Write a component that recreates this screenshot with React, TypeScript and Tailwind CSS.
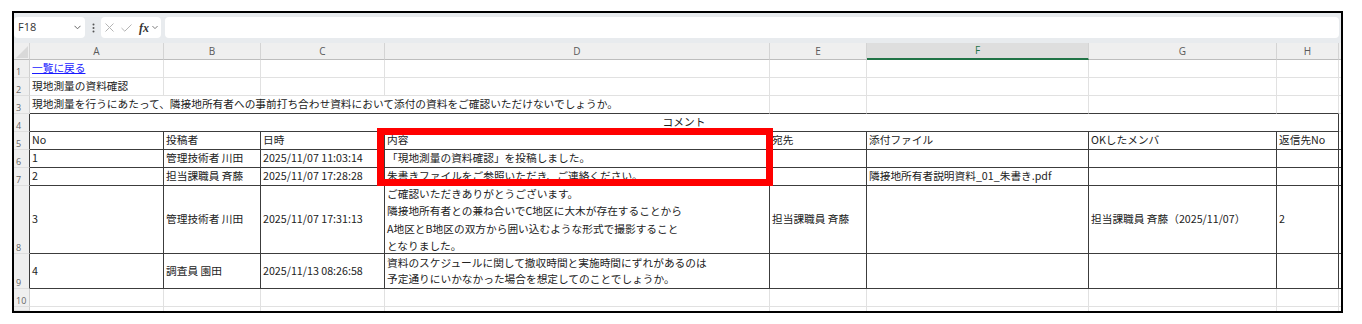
import React from 'react';

// column widths (A..H), right border included
const W = ['w-[134px]', 'w-[97px]', 'w-[124px]', 'w-[385px]', 'w-[97px]', 'w-[222px]', 'w-[188px]', 'w-[62px]'];
const LETTERS = ['A', 'B', 'C', 'D', 'E', 'F', 'G', 'H'];

const R_LIGHT = 'border-r-[#e1e1e1]';
const R_DARK = 'border-r-[#3c3c3c]';
const B_LIGHT = 'border-b-[#e1e1e1]';
const B_DARK = 'border-b-[#3c3c3c]';

type Content = string | string[];

interface CellProps {
  w: string;
  r?: string;
  b?: string;
  lh?: string;
  className?: string;
  children?: Content | React.ReactNode;
}

const Cell: React.FC<CellProps> = ({ w, r = R_LIGHT, b = B_LIGHT, lh = 'leading-[17px]', className = '', children }) => {
  const multi = Array.isArray(children);
  return (
    <div className={`${w} shrink-0 h-full border-r border-b ${r} ${b} flex ${multi ? 'flex-col justify-center' : 'items-center'} px-[2px] whitespace-nowrap overflow-hidden ${className}`}>
      {multi ? (children as string[]).map((line, i) => <span key={i} className={`block ${lh}`}>{line}</span>) : children}
    </div>
  );
};

const RowHead: React.FC<{ n?: number; dark?: boolean }> = ({ n, dark }) => (
  <div className={`w-[16px] shrink-0 h-full bg-[#efefef] border-r border-b border-b-[#dedede] ${dark ? R_DARK : 'border-r-[#cfcfcf]'} flex items-end pl-[2px] pb-[1px] text-[9px] leading-none text-[#666] font-['Open_Sans',sans-serif]`}>
    {n}
  </div>
);

const Filler: React.FC<{ b?: string }> = ({ b = B_LIGHT }) => <div className={`flex-1 h-full border-b ${b}`} />;

interface DataRowProps {
  n: number;
  h: string;
  cells: Content[];
  lh?: string;
  dark?: boolean;
}

const DataRow: React.FC<DataRowProps> = ({ n, h, cells, lh, dark = true }) => (
  <div className={`flex ${h}`}>
    <RowHead n={n} dark={dark} />
    {cells.map((c, i) => (
      <Cell key={i} w={W[i]} r={dark ? R_DARK : R_LIGHT} b={dark ? B_DARK : B_LIGHT} lh={lh}>
        {c}
      </Cell>
    ))}
    <Filler b={dark ? B_DARK : B_LIGHT} />
  </div>
);

const Chevron: React.FC<{ className?: string }> = ({ className = '' }) => (
  <svg width="7" height="5" viewBox="0 0 7 5" className={className}>
    <path d="M0.5 0.8 L3.5 3.8 L6.5 0.8" fill="none" stroke="#666" strokeWidth="1" />
  </svg>
);

const FormulaBar: React.FC = () => (
  <div className="h-[30px] bg-[#e8ebee] flex items-start pt-[4px] pr-[2px]">
    <div className="w-[71px] h-[21px] shrink-0 bg-white rounded-[4px] flex items-center justify-between pl-[4px] pr-[4px] text-[11px] text-[#333] font-['Open_Sans',sans-serif]">
      <span>F18</span>
      <Chevron />
    </div>
    <div className="w-[16px] h-[21px] shrink-0 flex items-center justify-center">
      <svg width="3" height="10" viewBox="0 0 3 10">
        <circle cx="1.5" cy="1.5" r="1" fill="#555" />
        <circle cx="1.5" cy="5" r="1" fill="#555" />
        <circle cx="1.5" cy="8.5" r="1" fill="#555" />
      </svg>
    </div>
    <div className="w-[60px] h-[21px] shrink-0 bg-white rounded-[4px] flex items-center">
      <svg width="9" height="9" viewBox="0 0 9 9" className="ml-[4px]">
        <path d="M0.5 0.5 L8.5 8.5 M8.5 0.5 L0.5 8.5" stroke="#b4b4b4" strokeWidth="1" fill="none" />
      </svg>
      <svg width="11" height="8" viewBox="0 0 11 8" className="ml-[7px]">
        <path d="M0.5 4 L3.8 7.2 L10.5 0.5" stroke="#b4b4b4" strokeWidth="1" fill="none" />
      </svg>
      <span className="ml-[7px] text-[12px] leading-none italic font-semibold text-[#333] font-['Liberation_Serif',serif]">fx</span>
      <Chevron className="ml-[3px] w-[6px]" />
    </div>
    <div className="ml-[4px] flex-1 h-[21px] bg-white rounded-[4px]" />
  </div>
);

const ColumnHeader: React.FC = () => (
  <div className="flex h-[17px] bg-[#efefef]">
    <div className="w-[16px] shrink-0 h-full border-r border-b border-r-[#d4d4d4] border-b-[#bdbdbd] flex items-end justify-end pr-[1px] pb-[1px]">
      <svg width="12" height="12" viewBox="0 0 12 12">
        <polygon points="12,0 12,12 0,12" fill="#d9d9d9" />
      </svg>
    </div>
    {LETTERS.map((l, i) =>
      l === 'F' ? (
        <div key={l} className={`${W[i]} shrink-0 h-full bg-[#dedede] border-r border-r-[#d4d4d4] border-b-2 border-b-[#217346] flex items-center justify-center text-[10px] text-[#217346] font-['Open_Sans',sans-serif]`}>
          {l}
        </div>
      ) : (
        <div key={l} className={`${W[i]} shrink-0 h-full border-r border-b border-r-[#d4d4d4] border-b-[#bdbdbd] flex items-center justify-center text-[10px] text-[#5a5a5a] font-['Open_Sans',sans-serif]`}>
          {l}
        </div>
      )
    )}
    <div className="flex-1 h-full border-b border-b-[#bdbdbd]" />
  </div>
);

const App: React.FC = () => {
  const tableRows: DataRowProps[] = [
    { n: 5, h: 'h-[18px]', cells: ['No', '投稿者', '日時', '内容', '宛先', '添付ファイル', 'OKしたメンバ', '返信先No'] },
    { n: 6, h: 'h-[18px]', cells: ['1', '管理技術者 川田', '2025/11/07 11:03:14', '「現地測量の資料確認」を投稿しました。', '', '', '', ''] },
    { n: 7, h: 'h-[18px]', cells: ['2', '担当課職員 斉藤', '2025/11/07 17:28:28', '朱書きファイルをご参照いただき、ご連絡ください。', '', '隣接地所有者説明資料_01_朱書き.pdf', '', ''] },
    {
      n: 8,
      h: 'h-[68px]',
      lh: 'leading-[17.5px]',
      cells: [
        '3',
        '管理技術者 川田',
        '2025/11/07 17:31:13',
        ['ご確認いただきありがとうございます。', '隣接地所有者との兼ね合いでC地区に大木が存在することから', 'A地区とB地区の双方から囲い込むような形式で撮影すること', 'となりました。'],
        '担当課職員 斉藤',
        '',
        '担当課職員 斉藤（2025/11/07）',
        '2',
      ],
    },
    {
      n: 9,
      h: 'h-[35px]',
      lh: 'leading-[16.5px]',
      cells: ['4', '調査員 園田', '2025/11/13 08:26:58', ['資料のスケジュールに関して撤収時間と実施時間にずれがあるのは', '予定通りにいかなかった場合を想定してのことでしょうか。'], '', '', '', ''],
    },
  ];

  return (
    <div className="relative w-[1362px] h-[324px] bg-white overflow-hidden pt-[11px] pl-[12px] font-['Noto_Sans_CJK_JP',sans-serif] text-[10.7px] text-[#222]">
      <div className="w-[1331px] h-[302px] border-2 border-black overflow-hidden flex flex-col">
        <FormulaBar />
        <ColumnHeader />

        {/* row 1 */}
        <div className="flex h-[18px]">
          <RowHead n={1} />
          <Cell w={W[0]}>
            <span className="text-[#1a1aff] underline">一覧に戻る</span>
          </Cell>
          {W.slice(1).map((w, i) => <Cell key={i} w={w} />)}
          <Filler />
        </div>

        {/* row 2 */}
        <div className="flex h-[18px]">
          <RowHead n={2} />
          <Cell w={W[0]}>現地測量の資料確認</Cell>
          {W.slice(1).map((w, i) => <Cell key={i} w={w} />)}
          <Filler />
        </div>

        {/* row 3: text overflows across A..D */}
        <div className="flex h-[18px]">
          <RowHead n={3} />
          <Cell w="w-[740px]" b={B_DARK}>
            現地測量を行うにあたって、隣接地所有者への事前打ち合わせ資料において添付の資料をご確認いただけないでしょうか。
          </Cell>
          {W.slice(4).map((w, i) => <Cell key={i} w={w} b={B_DARK} />)}
          <Filler />
        </div>

        {/* row 4: merged title */}
        <div className="flex h-[18px]">
          <RowHead n={4} dark />
          <Cell w="w-[1309px]" r={R_DARK} b={B_DARK} className="justify-center">
            コメント
          </Cell>
          <Filler />
        </div>

        {tableRows.map((row) => (
          <DataRow key={row.n} {...row} />
        ))}

        {/* row 10 */}
        <DataRow n={10} h="h-[18px]" dark={false} cells={['', '', '', '', '', '', '', '']} />

        {/* row 11, cut off */}
        <div className="flex flex-1">
          <RowHead />
          {W.map((w, i) => <Cell key={i} w={w} b="border-b-0" />)}
        </div>
      </div>

      {/* red highlight */}
      <div className="absolute left-[377px] top-[128px] w-[396px] h-[58px] border-[7px] border-[#ff0000]" />
    </div>
  );
};

export default App;
